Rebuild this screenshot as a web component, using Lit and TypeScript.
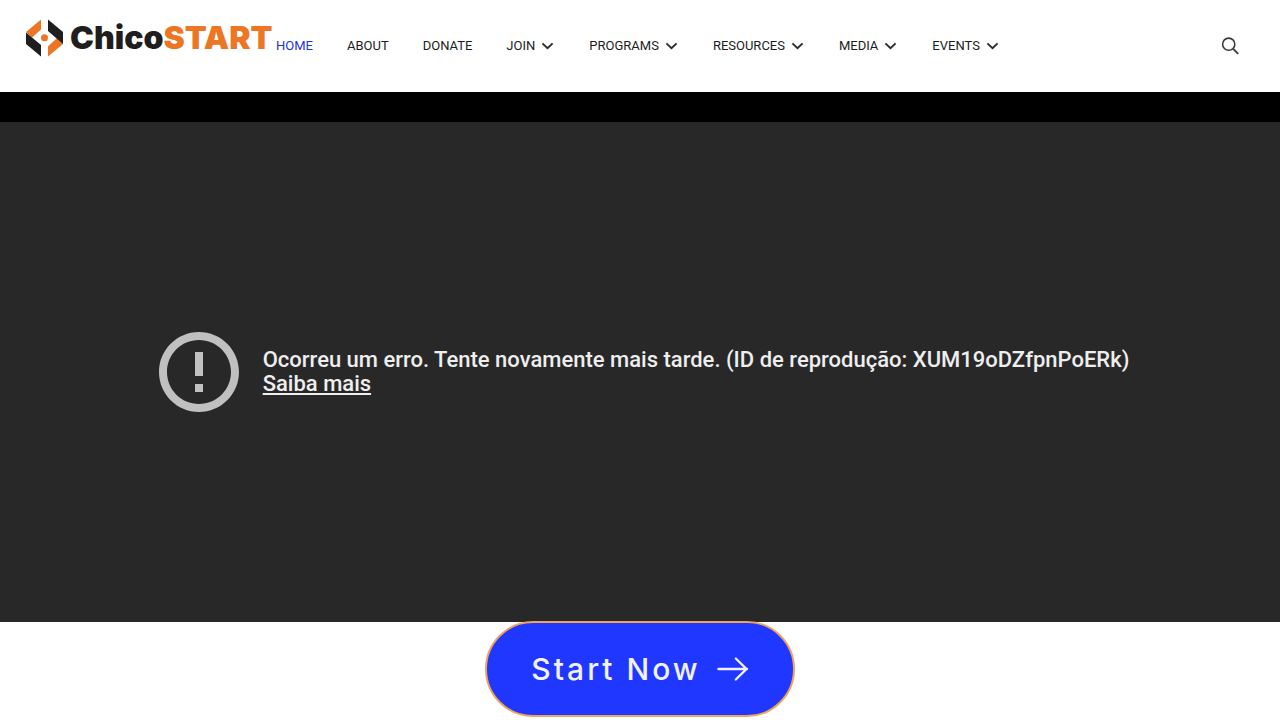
import { LitElement, html, css, svg } from "lit";
import { customElement } from "lit/decorators.js";

interface NavItem {
  label: string;
  menu?: boolean;
  current?: boolean;
}

const NAV: NavItem[] = [
  { label: "HOME", current: true },
  { label: "ABOUT" },
  { label: "DONATE" },
  { label: "JOIN", menu: true },
  { label: "PROGRAMS", menu: true },
  { label: "RESOURCES", menu: true },
  { label: "MEDIA", menu: true },
  { label: "EVENTS", menu: true },
];

const chevron = html`<svg class="chevron" viewBox="0 0 14 14" aria-hidden="true">
  ${svg`<path d="M1.4 4.4 L6.5 9.2 L11.6 4.4" fill="none" stroke="#2b2b2b" stroke-width="1.9"/>`}
</svg>`;

@customElement("site-header")
class SiteHeader extends LitElement {
  static styles = css`
    :host {
      display: block;
      background: #fff;
    }
    .bar {
      display: flex;
      align-items: center;
      min-height: 92px;
      padding: 0 40px 0 26px;
      box-sizing: border-box;
    }
    .logo {
      display: flex;
      align-items: center;
      width: 244px;
      gap: 6px;
      margin: 0 6px 16px 0;
      text-decoration: none;
      flex: none;
    }
    .mark {
      width: 38px;
      height: 38px;
      flex: none;
    }
    .name {
      font: 900 32px/36px Inter, sans-serif;
      color: #1e1e1e;
      white-space: nowrap;
    }
    .accent {
      color: #ec7623;
    }
    .links {
      display: flex;
      flex: 1;
      gap: 34px;
      margin: 0;
      padding: 0;
      list-style: none;
    }
    .link {
      display: flex;
      align-items: center;
      gap: 6px;
      font: 400 13px/20px Roboto, sans-serif;
      color: #1c1c1c;
      text-decoration: none;
      white-space: nowrap;
    }
    .current {
      color: #1f35d6;
    }
    .chevron {
      width: 14px;
      height: 14px;
    }
    .search {
      display: flex;
      padding: 0;
      border: 0;
      background: none;
      cursor: pointer;
    }
    .glass {
      width: 20px;
      height: 20px;
    }
  `;

  render() {
    return html`<header class="bar">
      <a class="logo" href="#home" aria-label="ChicoSTART">
        <svg class="mark" viewBox="0 0 38 38" aria-hidden="true">
          <path d="M15 0.5 V10.5 L6 18.5 L0 13 Z" fill="#ec7623" />
          <path d="M0 13.5 L15 26 V37.5 L0 25 Z" fill="#1e1e1e" />
          <path d="M37 25 L22 37.5 V27.5 L31 19 Z" fill="#ec7623" />
          <path d="M22 0.5 L37 13 V25 L22 12 Z" fill="#1e1e1e" />
          <circle cx="18.5" cy="18.7" r="3.5" fill="#ec7623" />
        </svg>
        <span class="name">Chico<span class="accent">START</span></span>
      </a>
      <ul class="links">
        ${NAV.map(
          (n) => html`<li>
            <a class="link ${n.current ? "current" : ""}" href="#${n.label.toLowerCase()}"
              >${n.label}${n.menu ? chevron : ""}</a
            >
          </li>`
        )}
      </ul>
      <button class="search" aria-label="Search">
        <svg class="glass" viewBox="0 0 20 20" fill="none" stroke="#3a3a3a">
          <circle cx="8.7" cy="8.2" r="6.1" stroke-width="1.6" />
          <path d="M13 12.6 L18.2 17.8" stroke-width="1.9" />
        </svg>
      </button>
    </header>`;
  }
}

@customElement("video-error")
class VideoError extends LitElement {
  static styles = css`
    :host {
      display: block;
      background: #000;
      padding-top: 30px;
    }
    .player {
      display: flex;
      align-items: center;
      justify-content: center;
      gap: 16px;
      min-height: 500px;
      background: #282828;
    }
    .icon {
      width: 96px;
      height: 96px;
      flex: none;
    }
    .message {
      font: 500 22px/24px Roboto, sans-serif;
      color: #eee;
    }
    .more {
      display: block;
      width: fit-content;
      color: inherit;
    }
  `;

  render() {
    return html`<section class="player">
      <svg class="icon" viewBox="0 0 24 24" fill="#c0c0c0" aria-hidden="true">
        <path
          d="M11 15h2v2h-2zm0-8h2v6h-2zm.99-5C6.47 2 2 6.48 2 12s4.47 10 9.99 10C17.52 22 22 17.52 22 12S17.52 2 11.99 2zM12 20c-4.42 0-8-3.58-8-8s3.58-8 8-8 8 3.58 8 8-3.58 8-8 8z"
        />
      </svg>
      <div class="message">
        Ocorreu um erro. Tente novamente mais tarde. (ID de reprodução: XUM19oDZfpnPoERk)
        <a class="more" href="#more">Saiba mais</a>
      </div>
    </section>`;
  }
}

@customElement("app-root")
class AppRoot extends LitElement {
  static styles = css`
    :host {
      display: block;
      background: #fff;
    }
    .cta {
      display: flex;
      justify-content: center;
      margin-top: -1px;
      padding-bottom: 3px;
    }
    .start {
      position: relative;
      display: flex;
      align-items: center;
      gap: 16px;
      height: 96px;
      padding: 0 44px;
      box-sizing: border-box;
      border: 2px solid #f0a35a;
      border-radius: 48px;
      background: #1f37ff;
      color: #f1f1ff;
      font: 500 30px/36px Inter, sans-serif;
      letter-spacing: 3px;
      white-space: nowrap;
      cursor: pointer;
    }
    .arrow {
      width: 32px;
      height: 32px;
    }
  `;

  render() {
    return html`<site-header></site-header>
      <main>
        <video-error></video-error>
        <div class="cta">
          <button class="start">
            Start Now
            <svg class="arrow" viewBox="0 0 32 32" fill="none" stroke="#f1f1ff" stroke-width="2.4" aria-hidden="true">
              <path d="M1.5 16 H30 M18.8 5.5 L29.5 16 L18.8 26.5" stroke-linecap="round" stroke-linejoin="round" />
            </svg>
          </button>
        </div>
      </main>`;
  }
}
